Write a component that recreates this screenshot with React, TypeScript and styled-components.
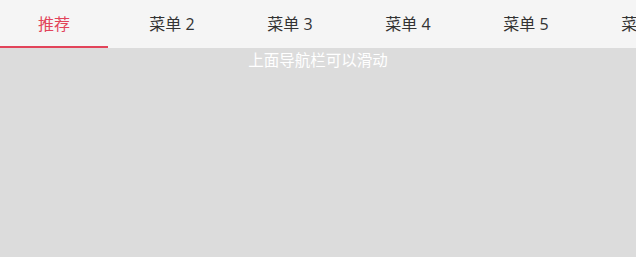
import React from "react";
import styled, { createGlobalStyle } from "styled-components";

const GlobalStyle = createGlobalStyle`
  html, body {
    margin: 0;
    padding: 0;
    height: 100%;
    background: #dcdcdc;
    font-family: "Open Sans", "Noto Sans CJK SC", sans-serif;
  }
  #root {
    height: 100%;
  }
`;

const Page = styled.div`
  height: 100%;
  background: #dcdcdc;
  overflow: hidden;
`;

const NavBar = styled.nav`
  height: 48px;
  background: #f5f5f5;
  overflow: hidden;
`;

const Track = styled.div`
  display: flex;
  gap: 10px;
  height: 100%;
`;

const Tab = styled.div<{ active?: boolean }>`
  flex: 0 0 108px;
  display: flex;
  align-items: center;
  justify-content: center;
  font-size: 16px;
  color: ${p => (p.active ? "#e2445a" : "#333")};
  box-sizing: border-box;
  border-bottom: 2px solid ${p => (p.active ? "#e2445a" : "transparent")};
`;

const Hint = styled.p`
  margin: 0;
  text-align: center;
  color: #fff;
  font-size: 15.5px;
  line-height: 25px;
`;

const tabs = ["推荐", "菜单 2", "菜单 3", "菜单 4", "菜单 5", "菜单 6", "菜单 7"];

export default function App() {
  return (
    <Page>
      <GlobalStyle />
      <NavBar>
        <Track>
          {tabs.map((t, i) => (
            <Tab key={t} active={i === 0}>
              {t}
            </Tab>
          ))}
        </Track>
      </NavBar>
      <Hint>上面导航栏可以滑动</Hint>
    </Page>
  );
}
